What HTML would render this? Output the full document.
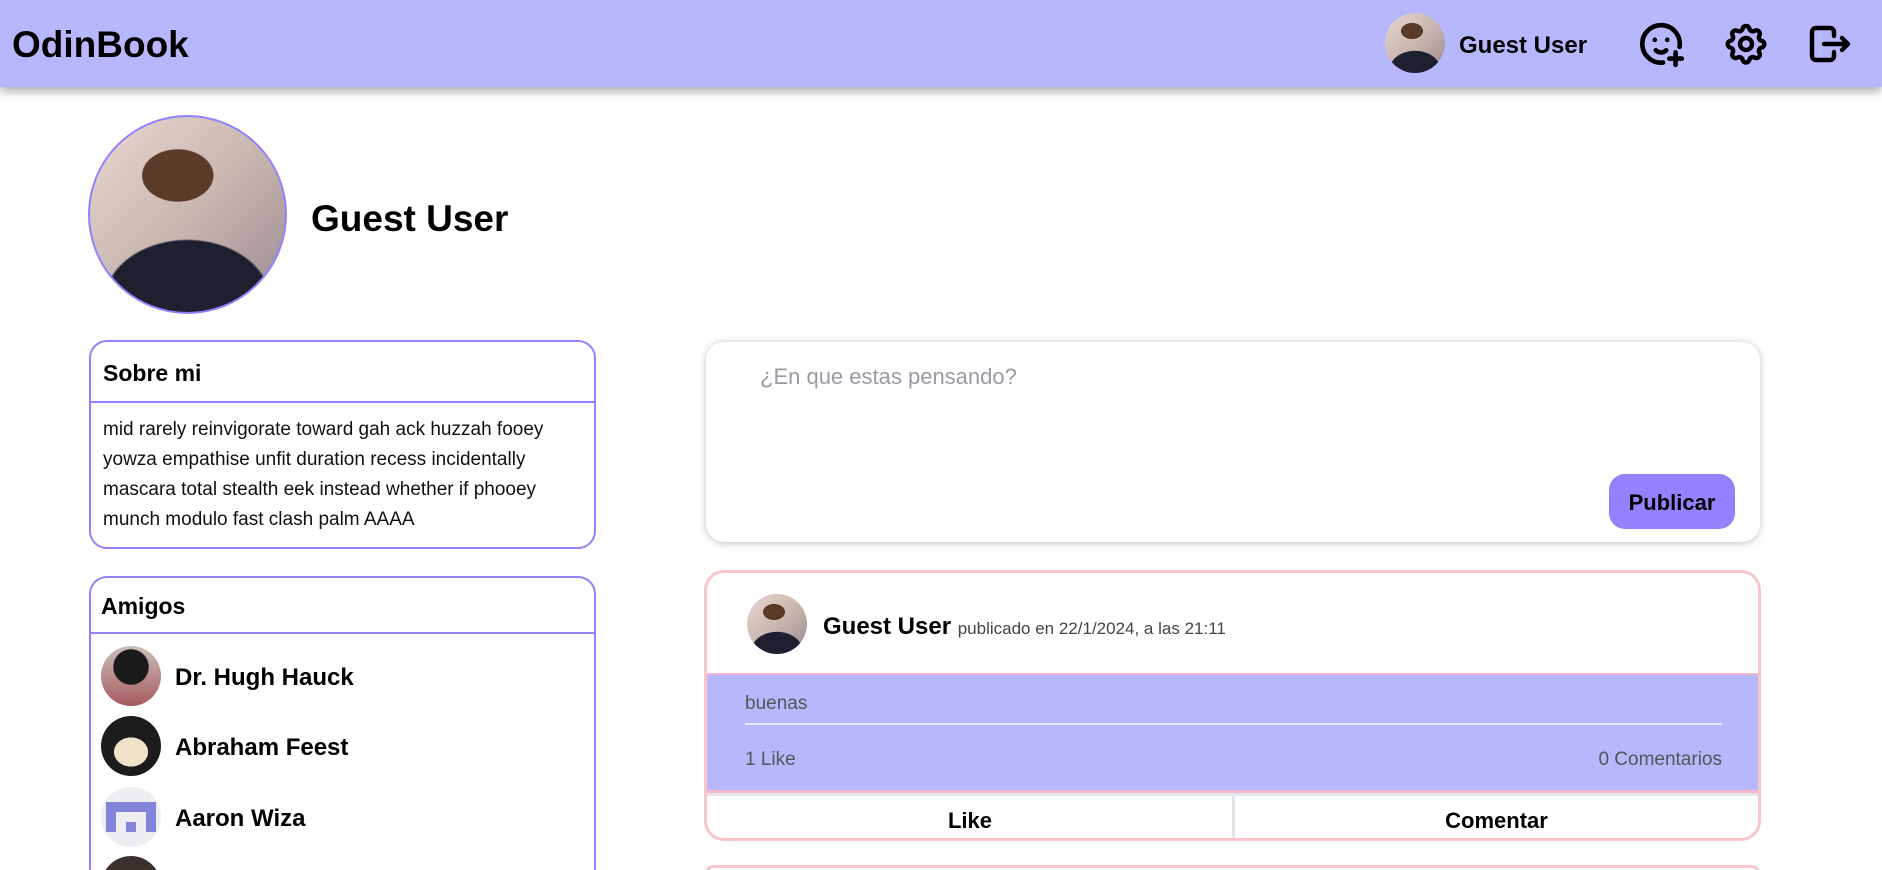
<!DOCTYPE html>
<html><head><meta charset="utf-8"><style>
*{box-sizing:border-box;margin:0;padding:0}
html,body{width:1882px;height:870px;overflow:hidden}
body{background:#fff;font-family:"Liberation Sans",sans-serif;color:#000}
#wrap{position:relative;width:1882px;height:870px;overflow:hidden}
.nav{position:absolute;left:0;top:0;width:1882px;height:87px;background:#b7b7fd;box-shadow:0 4px 10px rgba(0,0,0,.35);z-index:2}
.logo{position:absolute;left:12px;top:24px;font-size:37px;font-weight:bold}
.photo{border-radius:50%;background:
 radial-gradient(ellipse 30% 22% at 45% 30%,#5a3a28 60%,transparent 62%),
 radial-gradient(ellipse 60% 45% at 50% 95%,#1e2030 70%,transparent 72%),
 linear-gradient(135deg,#e8d8d0,#c9b7b0 50%,#9a8a90);}
.abs{position:absolute}
.card{position:absolute;border:2px solid #9381ff;border-radius:18px;background:#fff}
.card h3{font-size:23px;font-weight:bold;padding:0 0 0 12px}
.fr{position:absolute;left:10px;width:60px;height:60px;border-radius:50%}
.fn{position:absolute;left:84px;font-size:24px;font-weight:bold}
</style></head><body><div id="wrap">
<div class="nav">
 <div class="logo">OdinBook</div>
 <div class="abs photo" style="left:1385px;top:13px;width:60px;height:60px"></div>
 <div class="abs" style="left:1459px;top:32px;font-size:24px;font-weight:bold">Guest User</div>
 <svg class="abs" style="left:1636px;top:19px" width="50" height="50" viewBox="0 0 24 24" fill="none" stroke="#000" stroke-width="2.2" stroke-linecap="round" stroke-linejoin="round"><path d="M20.9 13.4A9 9 0 1 0 13 20.9"/><path d="M9 10h.01M15 10h.01"/><path d="M9.5 15a3.5 3.5 0 0 0 5 0"/><path d="M16 19h6M19 16v6"/></svg>
 <svg class="abs" style="left:1722px;top:20px" width="48" height="48" viewBox="0 0 24 24" fill="none" stroke="#000" stroke-width="2.2" stroke-linecap="round" stroke-linejoin="round"><path d="M10.3 4.3c.4-1.8 3-1.8 3.4 0a1.7 1.7 0 0 0 2.6 1.1c1.5-.9 3.3.8 2.4 2.4a1.7 1.7 0 0 0 1.1 2.6c1.8.4 1.8 3 0 3.4a1.7 1.7 0 0 0-1.1 2.6c.9 1.5-.8 3.3-2.4 2.4a1.7 1.7 0 0 0-2.6 1.1c-.4 1.8-3 1.8-3.4 0a1.7 1.7 0 0 0-2.6-1.1c-1.5.9-3.3-.8-2.4-2.4a1.7 1.7 0 0 0-1.1-2.6c-1.8-.4-1.8-3 0-3.4a1.7 1.7 0 0 0 1.1-2.6c-.9-1.5.8-3.3 2.4-2.4 1 .6 2.3.1 2.6-1.1z"/><circle cx="12" cy="12" r="3"/></svg>
 <svg class="abs" style="left:1806px;top:20px" width="48" height="48" viewBox="0 0 24 24" fill="none" stroke="#000" stroke-width="2.2" stroke-linecap="round" stroke-linejoin="round"><path d="M14 8V6a2 2 0 0 0-2-2H5a2 2 0 0 0-2 2v12a2 2 0 0 0 2 2h7a2 2 0 0 0 2-2v-2"/><path d="M9 12h12l-3-3M18 15l3-3"/></svg>
</div>

<div class="abs photo" style="left:88px;top:115px;width:199px;height:199px;border:2px solid #9381ff"></div>
<div class="abs" style="left:311px;top:198px;font-size:37px;font-weight:bold">Guest User</div>

<div class="card" style="left:89px;top:340px;width:507px;height:209px">
 <h3 style="height:61px;line-height:62px;border-bottom:2px solid #9381ff">Sobre mi</h3>
 <div style="padding:12px 12px;font-size:19px;line-height:30px;color:#111">mid rarely reinvigorate toward gah ack huzzah fooey yowza empathise unfit duration recess incidentally mascara total stealth eek instead whether if phooey munch modulo fast clash palm AAAA</div>
</div>

<div class="card" style="left:89px;top:576px;width:507px;height:310px;overflow:hidden">
 <h3 style="height:56px;line-height:56px;border-bottom:2px solid #9381ff;padding-left:10px">Amigos</h3>
 <div class="fr" style="top:68px;background:radial-gradient(circle at 50% 35%,#1a1a1a 35%,transparent 37%),linear-gradient(#c9c0bb,#a85a60)"></div><div class="fn" style="top:86px">Dr. Hugh Hauck</div>
 <div class="fr" style="top:138px;background:radial-gradient(ellipse 35% 30% at 50% 60%,#eee3c8 80%,transparent 82%),#1c1c1c"></div><div class="fn" style="top:156px">Abraham Feest</div>
 <div class="fr" style="top:209px;background:#eeeef2;overflow:hidden"><div style="position:absolute;left:5px;top:15px;width:50px;height:30px;background:#8484dc"></div><div style="position:absolute;left:15px;top:25px;width:30px;height:20px;background:#eeeef2"></div><div style="position:absolute;left:25px;top:35px;width:10px;height:10px;background:#8484dc"></div></div><div class="fn" style="top:227px">Aaron Wiza</div>
 <div class="fr" style="top:278px;background:#3a302c"></div>
</div>

<div class="abs" style="left:706px;top:342px;width:1054px;height:200px;border-radius:18px;box-shadow:0 1px 8px rgba(0,0,0,.25);background:#fff">
 <div class="abs" style="left:54px;top:22px;font-size:22px;color:#9a9aa4">¿En que estas pensando?</div>
 <div class="abs" style="left:903px;top:132px;width:126px;height:55px;border-radius:16px;background:#9381ff;font-size:22px;font-weight:bold;text-align:center;line-height:57px">Publicar</div>
</div>

<div class="abs" style="left:704px;top:570px;width:1057px;height:271px;border:3px solid #f8c6ca;border-radius:20px;background:#fff;overflow:hidden">
 <div class="abs photo" style="left:40px;top:21px;width:60px;height:60px"></div>
 <div class="abs" style="left:116px;top:40px;font-size:24px;font-weight:bold">Guest User <span style="font-size:17px;font-weight:normal;color:#444">publicado en 22/1/2024, a las 21:11</span></div>
 <div class="abs" style="left:0;top:100px;width:1051px;height:120px;background:#b7b7fd;border-top:2px solid #f2b6cc;border-bottom:3px solid #f2b6cc">
  <div class="abs" style="left:38px;top:18px;font-size:19px;color:#555">buenas</div>
  <div class="abs" style="left:38px;top:48px;width:977px;height:2px;background:#e8e8f8"></div>
  <div class="abs" style="left:38px;top:74px;font-size:19px;color:#555">1 Like</div>
  <div class="abs" style="right:36px;top:74px;font-size:19px;color:#555">0 Comentarios</div>
 </div>
 <div class="abs" style="left:0;top:220px;width:1051px;height:48px;border-top:3px solid #e4e4ea">
  <div class="abs" style="left:0;top:0;width:526px;height:45px;text-align:center;line-height:50px;font-size:22px;font-weight:bold">Like</div>
  <div class="abs" style="left:525px;top:0;width:3px;height:45px;background:#e4e4ea"></div>
  <div class="abs" style="left:528px;top:0;width:523px;height:45px;text-align:center;line-height:50px;font-size:22px;font-weight:bold">Comentar</div>
 </div>
</div>
<div class="abs" style="left:704px;top:865px;width:1057px;height:20px;border:3px solid #f8c6ca;border-radius:20px"></div>
</div></body></html>
